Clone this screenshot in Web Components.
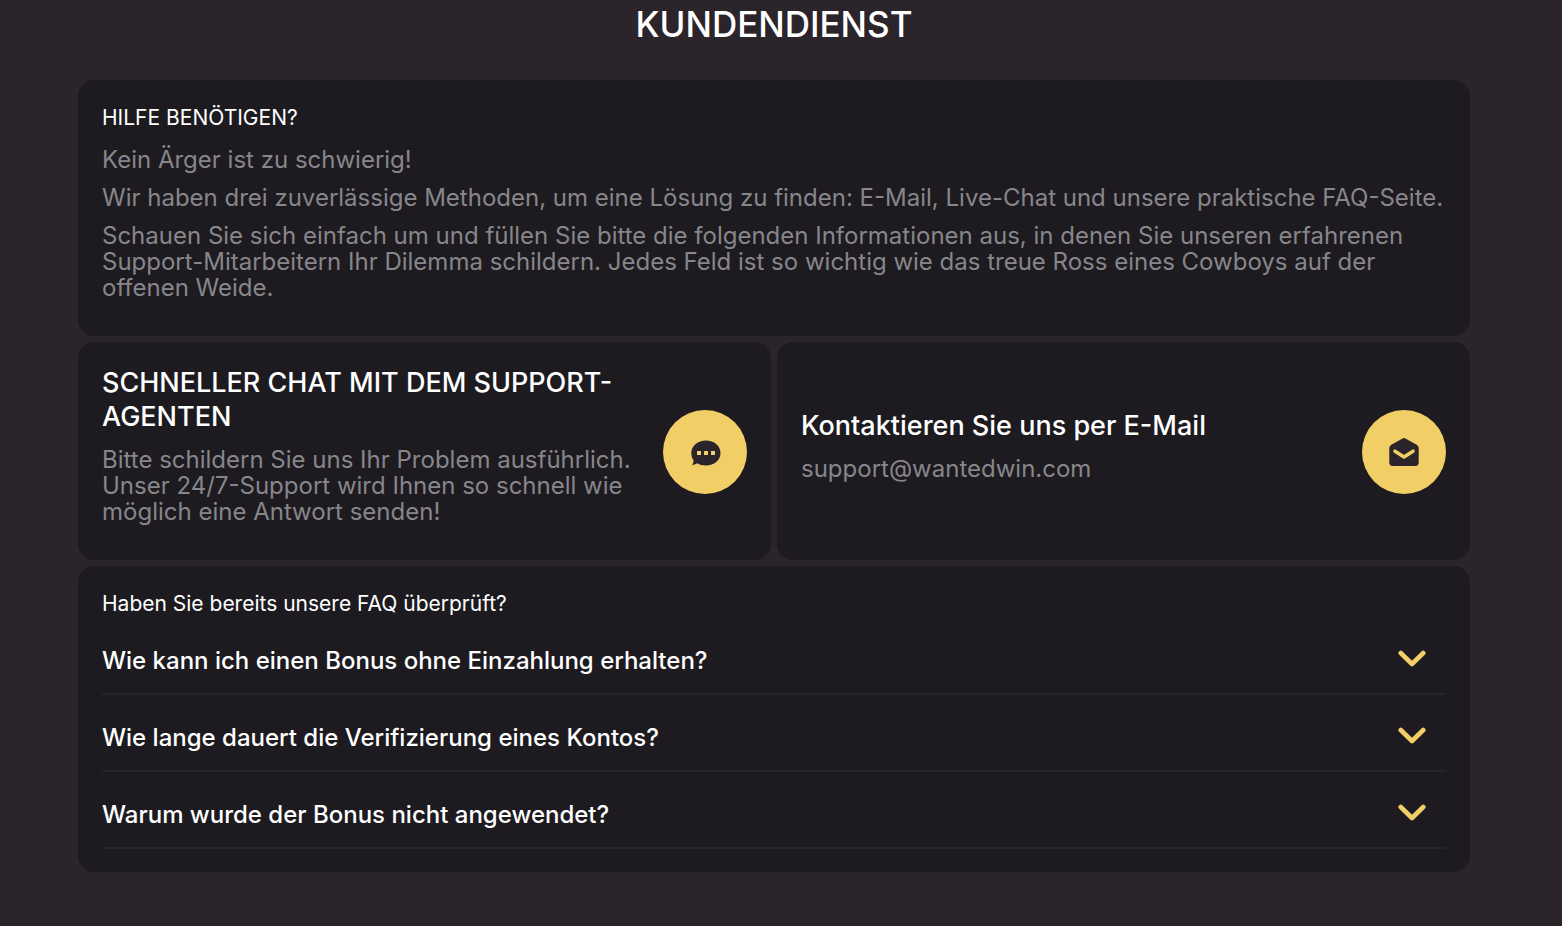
<!DOCTYPE html>
<html lang="de">
<head>
<meta charset="utf-8">
<meta name="viewport" content="width=device-width, initial-scale=1">
<title>Kundendienst</title>
<style>
  :root {
    --page: #2b242a;
    --card: #1d1b20;
    --line: #27252a;
    --muted: #87868a;
    --gold: #f2ce67;
  }
  body {
    margin: 0;
    background: var(--page);
    color: #fff;
    font: 400 24px/26px Inter, "Liberation Sans", sans-serif;
  }
</style>
</head>
<body>
<support-page>
  <span slot="title">KUNDENDIENST</span>
  <support-card>
    <support-intro></support-intro>
  </support-card>
  <contact-grid>
    <support-card>
      <contact-option kind="chat">
        <span slot="title">SCHNELLER CHAT MIT DEM SUPPORT-AGENTEN</span>
        <span>Bitte schildern Sie uns Ihr Problem ausführlich. Unser 24/7-Support wird Ihnen so schnell wie möglich eine Antwort senden!</span>
      </contact-option>
    </support-card>
    <support-card>
      <contact-option kind="mail">
        <span slot="title">Kontaktieren Sie uns per E-Mail</span>
        <span>support@wantedwin.com</span>
      </contact-option>
    </support-card>
  </contact-grid>
  <support-card>
    <faq-list>
      <span slot="title">Haben Sie bereits unsere FAQ überprüft?</span>
      <faq-item>Wie kann ich einen Bonus ohne Einzahlung erhalten?</faq-item>
      <faq-item>Wie lange dauert die Verifizierung eines Kontos?</faq-item>
      <faq-item>Warum wurde der Bonus nicht angewendet?</faq-item>
    </faq-list>
  </support-card>
</support-page>
<script>
  const define = (name, html, setup) => {
    const template = document.createElement('template');
    template.innerHTML = html;
    customElements.define(name, class extends HTMLElement {
      constructor() {
        super();
        this.attachShadow({ mode: 'open' }).append(template.content.cloneNode(true));
      }
      connectedCallback() { if (setup) setup(this, this.shadowRoot); }
    });
  };

  define('support-page', `
    <style>
      :host { display: block; padding: 0 92px 48px 78px; }
      h1 { margin: 0; padding: 0 0 32px; font-size: 35px; line-height: 48px; font-weight: 500; text-align: center; }
      main { display: flex; flex-direction: column; gap: 6px; }
    </style>
    <h1><slot name="title"></slot></h1>
    <main><slot></slot></main>`);

  define('support-card', `
    <style>
      :host { display: block; box-sizing: border-box; min-width: 0; padding: 24px 24px 23px; border-radius: 16px; background: var(--card); }
    </style>
    <slot></slot>`);

  define('support-intro', `
    <style>
      :host { display: block; }
      h2 { margin: 0 0 15px; font-size: 21px; line-height: 28px; font-weight: 400; }
      p { margin: 0 0 12px; color: var(--muted); }
    </style>
    <h2>HILFE BENÖTIGEN?</h2>
    <p>Kein Ärger ist zu schwierig!</p>
    <p>Wir haben drei zuverlässige Methoden, um eine Lösung zu finden: E-Mail, Live-Chat und unsere praktische FAQ-Seite.</p>
    <p>Schauen Sie sich einfach um und füllen Sie bitte die folgenden Informationen aus, in denen Sie unseren erfahrenen Support-Mitarbeitern Ihr Dilemma schildern. Jedes Feld ist so wichtig wie das treue Ross eines Cowboys auf der offenen Weide.</p>`);

  define('contact-grid', `
    <style>
      :host { display: grid; grid-template-columns: 1fr 1fr; gap: 6px; }
    </style>
    <slot></slot>`);

  const chatIcon = `<svg width="32" height="32" viewBox="0 0 32 32" aria-hidden="true">
      <path fill="#2b242a" d="M17 4.500C25 4.500 31.500 9.500 31.500 17S25 29.500 17 29.500C13.500 29.500 10.500 28.700 8 27.300C6.500 28.500 4.800 29 3 29C4.200 27.600 4.700 26 4.500 24.300C3 22.300 2.300 19.800 2.300 17C2.300 9.500 9 4.500 17 4.500Z"/>
      <path fill="#f2ce67" d="M8 15h4v4H8zM15 15h4v4h-4zM22 15h4v4h-4z"/>
    </svg>`;
  const mailIcon = `<svg width="32" height="32" viewBox="0 0 32 32" aria-hidden="true">
      <path fill="#2b242a" d="M14.600 2.500Q16 1.700 17.400 2.500L28.700 8.800Q30.700 10 30.700 12V26.500Q30.700 30 27 30H5Q1.300 30 1.300 26.500V12Q1.300 10 3.300 8.800Z"/>
      <path fill="none" stroke="#f2ce67" stroke-width="3.600" stroke-linecap="round" stroke-linejoin="round" d="M7 15.200L16 21L25 15.200"/>
    </svg>`;

  define('contact-option', `
    <style>
      :host { display: flex; align-items: center; gap: 24px; height: 100%; }
      .text { flex: 1; min-width: 0; }
      h2 { margin: 0 0 13px; font-size: 27px; line-height: 34px; font-weight: 500; }
      p { margin: 0 0 12px; color: var(--muted); }
      p a { color: inherit; text-decoration: none; }
      .action { display: flex; flex: none; align-items: center; justify-content: center; width: 84px; height: 84px; padding: 0; border: 0; border-radius: 50%; background: var(--gold); cursor: pointer; }
    </style>
    <div class="text"><h2><slot name="title"></slot></h2><p><slot></slot></p></div>`,
    (host, root) => {
      const address = 'mailto:support@wantedwin.com';
      const mail = host.getAttribute('kind') === 'mail';
      const action = document.createElement(mail ? 'a' : 'button');
      action.className = 'action';
      action.setAttribute('aria-label', mail ? 'E-Mail senden' : 'Chat öffnen');
      action.innerHTML = mail ? mailIcon : chatIcon;
      if (mail) {
        action.href = address;
        const link = document.createElement('a');
        link.href = address;
        const slot = root.querySelector('p slot');
        slot.replaceWith(link);
        link.append(slot);
      } else {
        action.type = 'button';
      }
      root.append(action);
    });

  define('faq-list', `
    <style>
      :host { display: block; }
      h2 { margin: 0; font-size: 21px; line-height: 28px; font-weight: 400; }
    </style>
    <h2><slot name="title"></slot></h2>
    <slot></slot>`);

  define('faq-item', `
    <style>
      :host { display: block; border-bottom: 2px solid var(--line); }
      h3 { margin: 0; font: inherit; }
      button { display: flex; align-items: center; justify-content: space-between; gap: 24px; width: 100%; padding: 26px 20px 15px 0; border: 0; background: none; color: inherit; font: inherit; font-weight: 500; line-height: 34px; text-align: left; cursor: pointer; }
      svg { flex: none; }
    </style>
    <h3><button type="button" aria-expanded="false">
      <slot></slot>
      <svg width="28" height="22" viewBox="0 0 28 22" aria-hidden="true"><path d="M2.700 3L14 14L25.300 3" fill="none" stroke="#f2ce67" stroke-width="4.600" stroke-linecap="round" stroke-linejoin="round"/></svg>
    </button></h3>`);
</script>
</body>
</html>
